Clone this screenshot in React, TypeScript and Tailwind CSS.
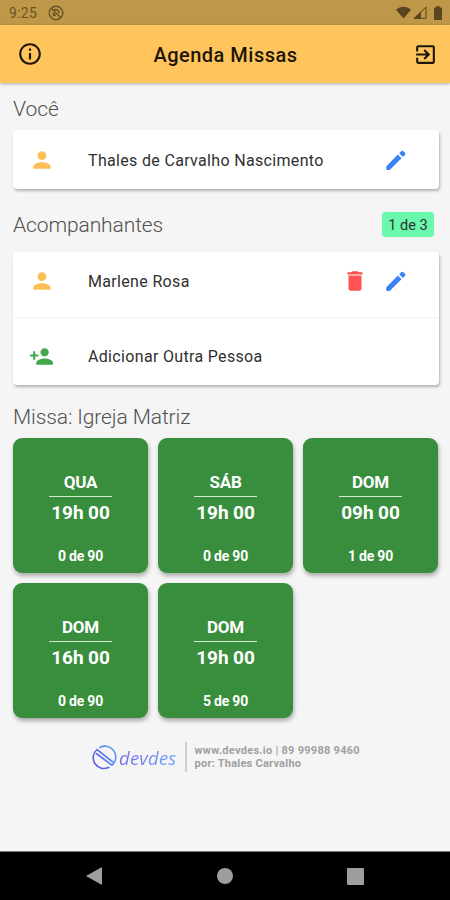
import React from 'react';
import { MdDelete, MdExitToApp, MdInfoOutline, MdPerson, MdPersonAdd } from 'react-icons/md';

const masses = [
  { day: 'QUA', time: '19h 00', seats: '0 de 90' },
  { day: 'SÁB', time: '19h 00', seats: '0 de 90' },
  { day: 'DOM', time: '09h 00', seats: '1 de 90' },
  { day: 'DOM', time: '16h 00', seats: '0 de 90' },
  { day: 'DOM', time: '19h 00', seats: '5 de 90' },
];

const cardShadow = 'shadow-[1px_2px_3px_rgba(0,0,0,0.28)]';

const StatusBar: React.FC = () => (
  <div className="h-[25px] bg-[#bf9748] flex items-center justify-between pl-[9px] pr-[8px] text-[#6b5328]">
    <div className="flex items-center gap-[11px]">
      <span className="text-[14px] leading-[25px] tracking-[0.3px] pt-[2px]">9:25</span>
      <svg className="w-[16px] h-[16px] mt-[1px]" viewBox="0 0 16 16" fill="none" stroke="currentColor">
        <circle cx="8" cy="8" r="6.8" strokeWidth="1.4" />
        <path d="M3.5 3.5 12.5 12.5" strokeWidth="1.4" />
        <path d="M5.8 5.2c2-1.5 5.3-.3 5.2 3M4.6 7.8l3 3.2M5.2 10.8l2-1.6" strokeWidth="1.6" />
      </svg>
    </div>
    <div className="flex items-center text-[#594621]">
      <svg className="w-[15px] h-[13px]" viewBox="0 0 16 13" fill="currentColor"><path d="M0 3.6C4.6-.8 11.4-.8 16 3.6L8 13Z" /></svg>
      <svg className="w-[14px] h-[13px] ml-[2px]" viewBox="0 0 14 13">
        <path d="M1.2 12.4H13V1Z" fill="none" stroke="currentColor" />
        <path d="M.5 12.8H8V5.6Z" fill="currentColor" />
      </svg>
      <svg className="w-[8px] h-[14px] ml-[7px]" viewBox="0 0 8 14" fill="currentColor"><path d="M2.4 0h3.2v1.4H7.2q.8 0 .8.8v11q0 .8-.8.8H.8q-.8 0-.8-.8v-11q0-.8.8-.8h1.6Z" /></svg>
    </div>
  </div>
);

const Pencil: React.FC = () => (
  <svg className="w-[20px] h-[20px] text-[#3b82f6]" viewBox="0 0 20 20" fill="currentColor">
    <path d="M.6 15.9 11.9 4.6l3.6 3.6L4.2 19.5q-.4.4-.9.4H1.2Q.2 19.900.2 18.900V16.800Q.2 16.300.6 15.900Z" />
    <path d="M13.200 3.300 15.400 1.100q.9-.9 1.800 0l1.900 1.900q.9.900 0 1.800L16.900 7Z" />
  </svg>
);

const Footer: React.FC = () => (
  <footer className="ml-[92px] flex items-center">
    <svg className="w-[25px] h-[25px] shrink-0" viewBox="0 0 25 25" fill="none" strokeWidth="1.6" strokeLinecap="round">
      <defs>
        <linearGradient id="brand" gradientUnits="userSpaceOnUse" x1="1" y1="20" x2="24" y2="6">
          <stop offset="0" stopColor="#5a50dc" />
          <stop offset="1" stopColor="#5aa6f8" />
        </linearGradient>
      </defs>
      <g stroke="url(#brand)">
        <path d="M17 22.300A10.800 10.800 0 0 1 5 4.500L20.800 17" />
        <path d="M8 2.400A10.800 10.800 0 0 1 20 20.200L4.300 8.500" />
      </g>
    </svg>
    <span className="ml-[2px] w-[60px] font-['Open_Sans',sans-serif] italic text-[18.5px] leading-[25px] tracking-[0.2px] bg-linear-to-r from-[#766bea] to-[#6aa6f8] bg-clip-text text-transparent">devdes</span>
    <div className="ml-[6px] w-[1.5px] h-[30px] bg-[#cfcfcf]" />
    <div className="ml-[8px] font-bold text-[11px] leading-[13px] text-[#a0a0a0] whitespace-nowrap">
      <p className="tracking-[0.27px]">www.devdes.io | 89 99988 9460</p>
      <p className="tracking-[0.24px]">por: Thales Carvalho</p>
    </div>
  </footer>
);

const App: React.FC = () => {
  return (
    <div className="w-[450px] h-[900px] overflow-hidden flex flex-col bg-[#f5f5f5] font-[Roboto,sans-serif]">
      <StatusBar />
      <header className="h-[58px] bg-[#ffc55c] flex items-center justify-between pl-[17px] pr-[12px] text-[#1c1609] shadow-[0_1px_3px_rgba(0,0,0,0.3)]">
        <MdInfoOutline size={26} />
        <h1 className="text-[20px] font-medium tracking-[0.5px] mr-[5px] pt-[2px]">Agenda Missas</h1>
        <MdExitToApp size={25} />
      </header>

      <main className="px-[13px] text-[#303030]">
        <h2 className="mt-[13px] h-[26px] leading-[26px] text-[21px] font-light text-[#505050]">Você</h2>
        <div className={`mt-[8px] h-[59px] w-[426px] bg-white rounded-[4px] flex items-center pl-[16px] pr-[33px] ${cardShadow}`}>
          <MdPerson size={26} className="text-[#fdbf55]" />
          <span className="ml-[33px] pt-[2px] flex-1 text-[16px] tracking-[0.33px]">Thales de Carvalho Nascimento</span>
          <Pencil />
        </div>

        <div className="mt-[23px] h-[26px] flex items-center justify-between pr-[4px]">
          <h2 className="leading-[26px] text-[21px] font-light tracking-[-0.1px] text-[#505050]">Acompanhantes</h2>
          <span className="w-[52px] h-[25px] mt-[-1px] mr-[-1px] rounded-[3px] bg-[#69f8ac] text-center text-[14.5px] leading-[27px]">1 de 3</span>
        </div>
        <div className={`mt-[14px] h-[133px] w-[426px] bg-white rounded-[4px] ${cardShadow}`}>
          <div className="h-[66px] pb-[8px] flex items-center pl-[16px] pr-[33px] border-b border-[#f3f3f3]">
            <MdPerson size={26} className="text-[#fdbf55]" />
            <span className="ml-[33px] pt-[2px] flex-1 text-[16px] tracking-[0.33px]">Marlene Rosa</span>
            <MdDelete size={26} className="text-[#ff5252] mr-[18px]" />
            <Pencil />
          </div>
          <div className="h-[67px] pt-[9px] flex items-center pl-[16px]">
            <MdPersonAdd size={25} className="text-[#43a84a]" />
            <span className="ml-[34px] pt-px text-[16px] tracking-[0.33px]">Adicionar Outra Pessoa</span>
          </div>
        </div>

        <h2 className="mt-[19px] h-[26px] leading-[26px] text-[21px] font-light tracking-[-0.1px] text-[#505050]">Missa: Igreja Matriz</h2>
        <div className="mt-[8px] grid grid-cols-[repeat(3,135px)] gap-[10px]">
          {masses.map((m, i) => (
            <div key={i} className="h-[135px] rounded-[9px] bg-[#388e3c] text-white font-bold flex flex-col items-center shadow-[1px_3px_4px_rgba(0,0,0,0.3)]">
              <p className="mt-[34px] text-[17px] leading-[20px] tracking-[-0.2px]">{m.day}</p>
              <div className="mt-[4px] w-[63px] h-px bg-[#d5e8d6]" />
              <p className="mt-[5px] text-[19px] leading-[22px] tracking-[-0.1px]">{m.time}</p>
              <p className="mt-[24px] text-[14px] leading-[16px] tracking-[-0.2px]">{m.seats}</p>
            </div>
          ))}
        </div>
      </main>

      <div className="flex-1 pt-[24px]">
        <Footer />
      </div>

      <nav className="h-[49px] bg-black border-t border-[#777] flex items-center justify-between pl-[86px] pr-[86px] text-[#9e9e9e]">
        <svg className="w-[16px] h-[18px]" viewBox="0 0 16 18" fill="currentColor"><path d="M0 9 16 0V18Z" /></svg>
        <div className="w-[16px] h-[16px] rounded-full bg-[#9e9e9e]" />
        <div className="w-[17px] h-[17px] rounded-[1px] bg-[#9e9e9e]" />
      </nav>
    </div>
  );
};

export default App;
